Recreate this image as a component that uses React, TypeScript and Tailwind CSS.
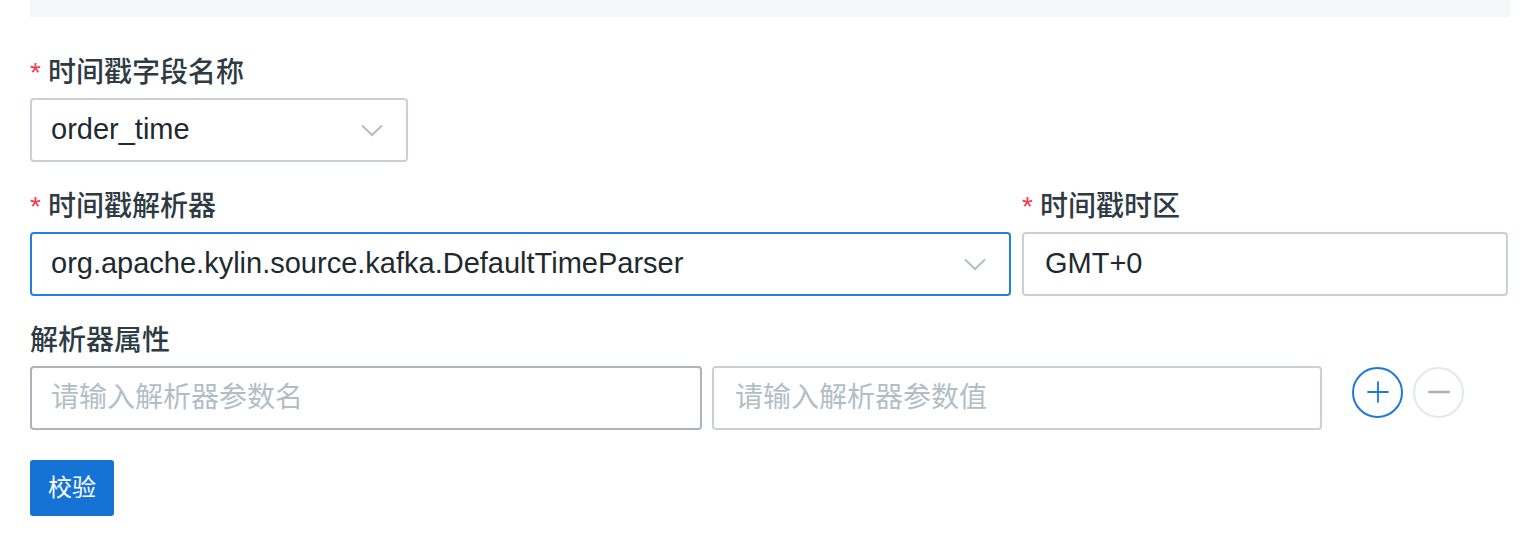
import { Plus, Minus } from 'lucide-react';

const font = { fontFamily: '"Liberation Sans", "Noto Sans CJK SC", sans-serif' };

function Label({ text, required }: { text: string; required?: boolean }) {
  return (
    <div className="h-[40px] leading-[40px] mb-[5px] text-[28px] font-medium text-[#2e3b44] whitespace-nowrap">
      {required && <span className="text-[#f23a4b] mr-[7px]">*</span>}
      {text}
    </div>
  );
}

function Chevron() {
  return (
    <svg width="22" height="13" viewBox="0 0 22 13" className="shrink-0">
      <path d="M1 1.5 L11 11 L21 1.5" fill="none" stroke="#b3bfc6" strokeWidth="2" />
    </svg>
  );
}

function SelectBox({ value, active }: { value: string; active?: boolean }) {
  return (
    <div
      className={
        'h-[64px] rounded-[4px] border-2 flex items-center justify-between pl-[19px] pr-[23px] text-[29px] text-[#1f2a30] bg-white ' +
        (active ? 'border-[#2180db]' : 'border-[#c8d1d6]')
      }
    >
      <span className="whitespace-nowrap">{value}</span>
      <Chevron />
    </div>
  );
}

export default function App() {
  return (
    <div className="w-[1526px] h-[548px] bg-white pl-[30px]" style={font}>
      <div className="w-[1480px] h-[17px] bg-[#f4f8f9]" />

      <div className="mt-[36px] w-[1478px]">
        {/* timestamp column */}
        <div className="mb-[25px]">
          <Label text="时间戳字段名称" required />
          <div className="w-[378px]">
            <SelectBox value="order_time" />
          </div>
        </div>

        {/* parser + timezone */}
        <div className="mb-[25px] grid grid-cols-[981px_486px] gap-x-[11px]">
          <div>
            <Label text="时间戳解析器" required />
            <SelectBox value="org.apache.kylin.source.kafka.DefaultTimeParser" active />
          </div>
          <div>
            <Label text="时间戳时区" required />
            <div className="h-[64px] rounded-[4px] border-2 border-[#c8d1d6] flex items-center pl-[21px] text-[29px] text-[#1f2a30]">
              GMT+0
            </div>
          </div>
        </div>

        {/* parser properties */}
        <div className="mb-[30px]">
          <Label text="解析器属性" />
          <div className="flex items-center">
            <div className="w-[672px] h-[64px] rounded-[4px] border-2 border-[#a9b5bc] flex items-center pl-[19px] text-[28px] text-[#b2bec6]">
              请输入解析器参数名
            </div>
            <div className="ml-[10px] w-[610px] h-[64px] rounded-[4px] border-2 border-[#c8d1d6] flex items-center pl-[21px] text-[28px] text-[#b2bec6]">
              请输入解析器参数值
            </div>
            <div className="ml-[30px] w-[51px] h-[51px] -mt-[12px] rounded-full border-2 border-[#1f7ad6] flex items-center justify-center">
              <Plus size={34} strokeWidth={1.3} color="#1f7ad6" />
            </div>
            <div className="ml-[10px] w-[51px] h-[51px] -mt-[12px] rounded-full border-2 border-[#e3e7ef] flex items-center justify-center">
              <Minus size={34} strokeWidth={1.6} color="#a6b0b7" />
            </div>
          </div>
        </div>

        <button className="h-[56px] w-[84px] rounded-[3px] bg-[#1673d6] text-white text-[24px] flex items-center justify-center">
          校验
        </button>
      </div>
    </div>
  );
}
